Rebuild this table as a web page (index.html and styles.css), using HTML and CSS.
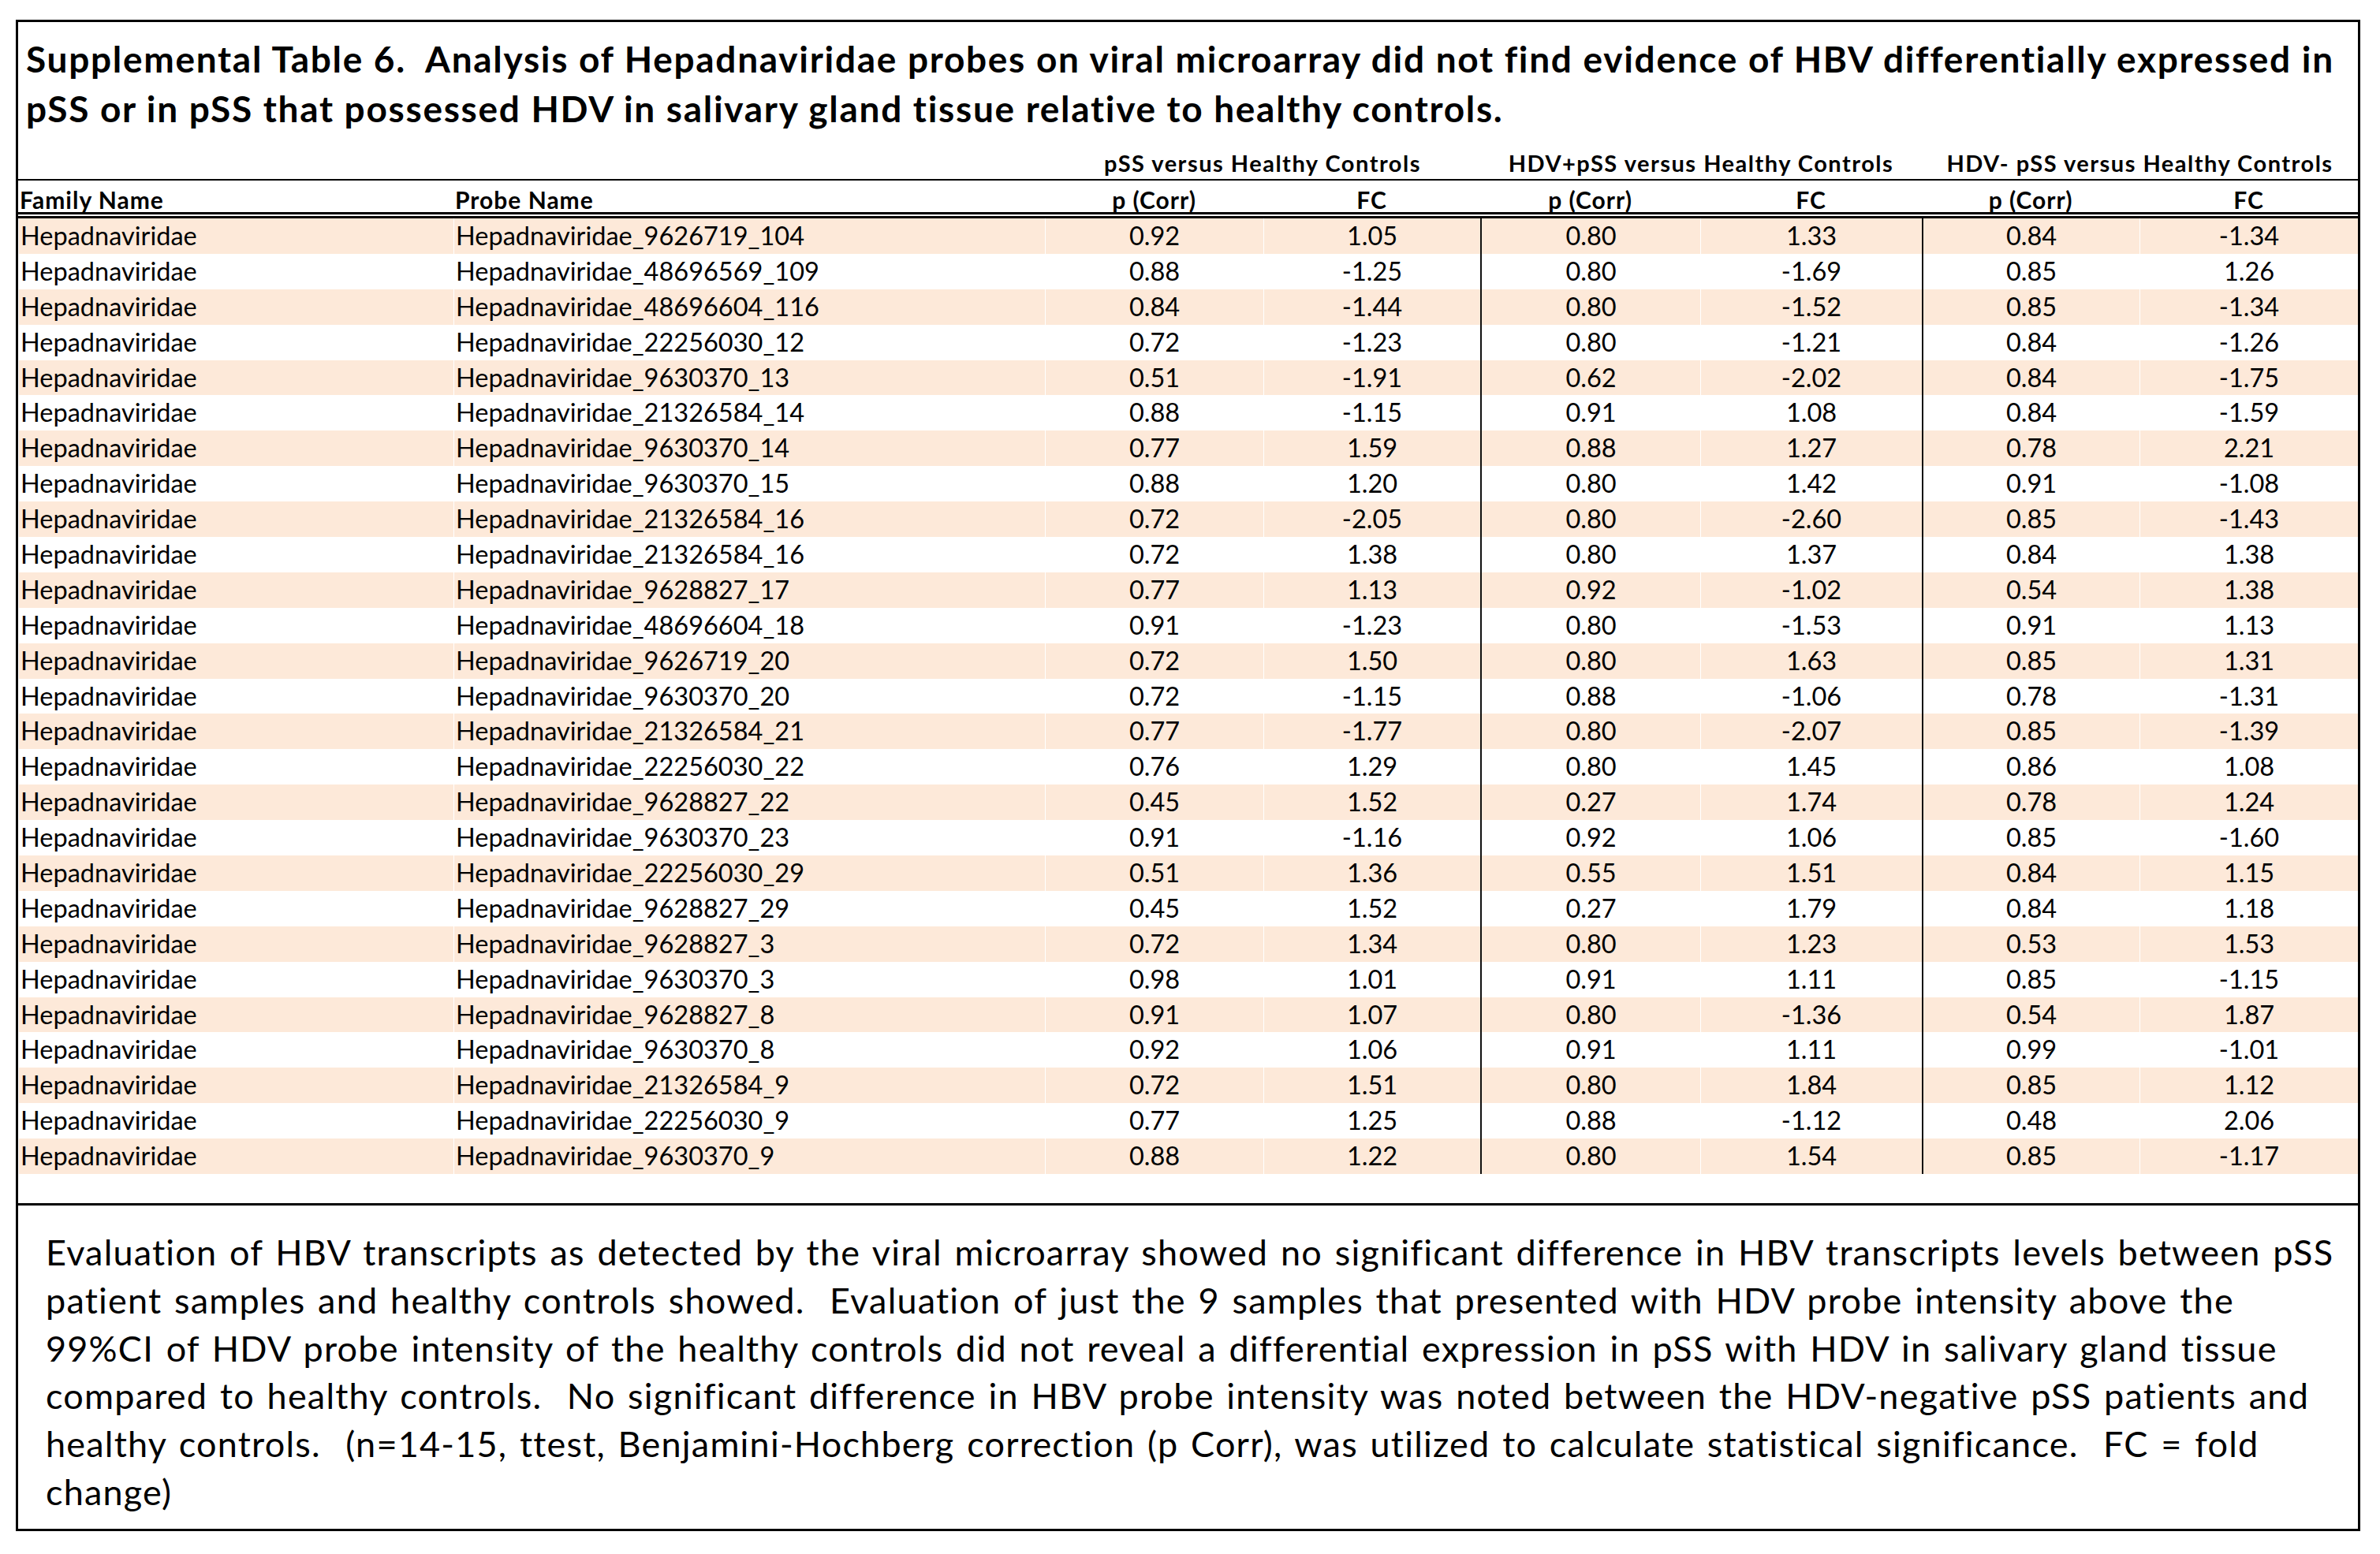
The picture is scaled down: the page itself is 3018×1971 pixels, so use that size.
FILE: index.html
```html
<!DOCTYPE html>
<html lang="en">
<head>
<meta charset="utf-8">
<title>Supplemental Table 6</title>
<link rel="stylesheet" href="styles.css">
</head>
<body>
<div class="sheet">
  <div class="title">Supplemental Table 6.&nbsp; Analysis of Hepadnaviridae probes on viral microarray did not find evidence of HBV differentially expressed in<br>pSS or in pSS that possessed HDV in salivary gland tissue relative to healthy controls.</div>

  <div class="row groups">
    <div class="span2"></div>
    <div class="span2 ctr">pSS versus Healthy Controls</div>
    <div class="span2 ctr">HDV+pSS versus Healthy Controls</div>
    <div class="span2 ctr">HDV- pSS versus Healthy Controls</div>
  </div>

  <div class="row heads">
    <div class="lft">Family Name</div>
    <div class="lft">Probe Name</div>
    <div class="ctr">p (Corr)</div>
    <div class="ctr">FC</div>
    <div class="ctr">p (Corr)</div>
    <div class="ctr">FC</div>
    <div class="ctr">p (Corr)</div>
    <div class="ctr">FC</div>
  </div>

  <div class="body">
    <div class="row data"><div class="lft">Hepadnaviridae</div><div class="lft">Hepadnaviridae_9626719_104</div><div class="ctr">0.92</div><div class="ctr">1.05</div><div class="ctr sep">0.80</div><div class="ctr">1.33</div><div class="ctr sep">0.84</div><div class="ctr">-1.34</div></div>
    <div class="row data"><div class="lft">Hepadnaviridae</div><div class="lft">Hepadnaviridae_48696569_109</div><div class="ctr">0.88</div><div class="ctr">-1.25</div><div class="ctr sep">0.80</div><div class="ctr">-1.69</div><div class="ctr sep">0.85</div><div class="ctr">1.26</div></div>
    <div class="row data"><div class="lft">Hepadnaviridae</div><div class="lft">Hepadnaviridae_48696604_116</div><div class="ctr">0.84</div><div class="ctr">-1.44</div><div class="ctr sep">0.80</div><div class="ctr">-1.52</div><div class="ctr sep">0.85</div><div class="ctr">-1.34</div></div>
    <div class="row data"><div class="lft">Hepadnaviridae</div><div class="lft">Hepadnaviridae_22256030_12</div><div class="ctr">0.72</div><div class="ctr">-1.23</div><div class="ctr sep">0.80</div><div class="ctr">-1.21</div><div class="ctr sep">0.84</div><div class="ctr">-1.26</div></div>
    <div class="row data"><div class="lft">Hepadnaviridae</div><div class="lft">Hepadnaviridae_9630370_13</div><div class="ctr">0.51</div><div class="ctr">-1.91</div><div class="ctr sep">0.62</div><div class="ctr">-2.02</div><div class="ctr sep">0.84</div><div class="ctr">-1.75</div></div>
    <div class="row data"><div class="lft">Hepadnaviridae</div><div class="lft">Hepadnaviridae_21326584_14</div><div class="ctr">0.88</div><div class="ctr">-1.15</div><div class="ctr sep">0.91</div><div class="ctr">1.08</div><div class="ctr sep">0.84</div><div class="ctr">-1.59</div></div>
    <div class="row data"><div class="lft">Hepadnaviridae</div><div class="lft">Hepadnaviridae_9630370_14</div><div class="ctr">0.77</div><div class="ctr">1.59</div><div class="ctr sep">0.88</div><div class="ctr">1.27</div><div class="ctr sep">0.78</div><div class="ctr">2.21</div></div>
    <div class="row data"><div class="lft">Hepadnaviridae</div><div class="lft">Hepadnaviridae_9630370_15</div><div class="ctr">0.88</div><div class="ctr">1.20</div><div class="ctr sep">0.80</div><div class="ctr">1.42</div><div class="ctr sep">0.91</div><div class="ctr">-1.08</div></div>
    <div class="row data"><div class="lft">Hepadnaviridae</div><div class="lft">Hepadnaviridae_21326584_16</div><div class="ctr">0.72</div><div class="ctr">-2.05</div><div class="ctr sep">0.80</div><div class="ctr">-2.60</div><div class="ctr sep">0.85</div><div class="ctr">-1.43</div></div>
    <div class="row data"><div class="lft">Hepadnaviridae</div><div class="lft">Hepadnaviridae_21326584_16</div><div class="ctr">0.72</div><div class="ctr">1.38</div><div class="ctr sep">0.80</div><div class="ctr">1.37</div><div class="ctr sep">0.84</div><div class="ctr">1.38</div></div>
    <div class="row data"><div class="lft">Hepadnaviridae</div><div class="lft">Hepadnaviridae_9628827_17</div><div class="ctr">0.77</div><div class="ctr">1.13</div><div class="ctr sep">0.92</div><div class="ctr">-1.02</div><div class="ctr sep">0.54</div><div class="ctr">1.38</div></div>
    <div class="row data"><div class="lft">Hepadnaviridae</div><div class="lft">Hepadnaviridae_48696604_18</div><div class="ctr">0.91</div><div class="ctr">-1.23</div><div class="ctr sep">0.80</div><div class="ctr">-1.53</div><div class="ctr sep">0.91</div><div class="ctr">1.13</div></div>
    <div class="row data"><div class="lft">Hepadnaviridae</div><div class="lft">Hepadnaviridae_9626719_20</div><div class="ctr">0.72</div><div class="ctr">1.50</div><div class="ctr sep">0.80</div><div class="ctr">1.63</div><div class="ctr sep">0.85</div><div class="ctr">1.31</div></div>
    <div class="row data"><div class="lft">Hepadnaviridae</div><div class="lft">Hepadnaviridae_9630370_20</div><div class="ctr">0.72</div><div class="ctr">-1.15</div><div class="ctr sep">0.88</div><div class="ctr">-1.06</div><div class="ctr sep">0.78</div><div class="ctr">-1.31</div></div>
    <div class="row data"><div class="lft">Hepadnaviridae</div><div class="lft">Hepadnaviridae_21326584_21</div><div class="ctr">0.77</div><div class="ctr">-1.77</div><div class="ctr sep">0.80</div><div class="ctr">-2.07</div><div class="ctr sep">0.85</div><div class="ctr">-1.39</div></div>
    <div class="row data"><div class="lft">Hepadnaviridae</div><div class="lft">Hepadnaviridae_22256030_22</div><div class="ctr">0.76</div><div class="ctr">1.29</div><div class="ctr sep">0.80</div><div class="ctr">1.45</div><div class="ctr sep">0.86</div><div class="ctr">1.08</div></div>
    <div class="row data"><div class="lft">Hepadnaviridae</div><div class="lft">Hepadnaviridae_9628827_22</div><div class="ctr">0.45</div><div class="ctr">1.52</div><div class="ctr sep">0.27</div><div class="ctr">1.74</div><div class="ctr sep">0.78</div><div class="ctr">1.24</div></div>
    <div class="row data"><div class="lft">Hepadnaviridae</div><div class="lft">Hepadnaviridae_9630370_23</div><div class="ctr">0.91</div><div class="ctr">-1.16</div><div class="ctr sep">0.92</div><div class="ctr">1.06</div><div class="ctr sep">0.85</div><div class="ctr">-1.60</div></div>
    <div class="row data"><div class="lft">Hepadnaviridae</div><div class="lft">Hepadnaviridae_22256030_29</div><div class="ctr">0.51</div><div class="ctr">1.36</div><div class="ctr sep">0.55</div><div class="ctr">1.51</div><div class="ctr sep">0.84</div><div class="ctr">1.15</div></div>
    <div class="row data"><div class="lft">Hepadnaviridae</div><div class="lft">Hepadnaviridae_9628827_29</div><div class="ctr">0.45</div><div class="ctr">1.52</div><div class="ctr sep">0.27</div><div class="ctr">1.79</div><div class="ctr sep">0.84</div><div class="ctr">1.18</div></div>
    <div class="row data"><div class="lft">Hepadnaviridae</div><div class="lft">Hepadnaviridae_9628827_3</div><div class="ctr">0.72</div><div class="ctr">1.34</div><div class="ctr sep">0.80</div><div class="ctr">1.23</div><div class="ctr sep">0.53</div><div class="ctr">1.53</div></div>
    <div class="row data"><div class="lft">Hepadnaviridae</div><div class="lft">Hepadnaviridae_9630370_3</div><div class="ctr">0.98</div><div class="ctr">1.01</div><div class="ctr sep">0.91</div><div class="ctr">1.11</div><div class="ctr sep">0.85</div><div class="ctr">-1.15</div></div>
    <div class="row data"><div class="lft">Hepadnaviridae</div><div class="lft">Hepadnaviridae_9628827_8</div><div class="ctr">0.91</div><div class="ctr">1.07</div><div class="ctr sep">0.80</div><div class="ctr">-1.36</div><div class="ctr sep">0.54</div><div class="ctr">1.87</div></div>
    <div class="row data"><div class="lft">Hepadnaviridae</div><div class="lft">Hepadnaviridae_9630370_8</div><div class="ctr">0.92</div><div class="ctr">1.06</div><div class="ctr sep">0.91</div><div class="ctr">1.11</div><div class="ctr sep">0.99</div><div class="ctr">-1.01</div></div>
    <div class="row data"><div class="lft">Hepadnaviridae</div><div class="lft">Hepadnaviridae_21326584_9</div><div class="ctr">0.72</div><div class="ctr">1.51</div><div class="ctr sep">0.80</div><div class="ctr">1.84</div><div class="ctr sep">0.85</div><div class="ctr">1.12</div></div>
    <div class="row data"><div class="lft">Hepadnaviridae</div><div class="lft">Hepadnaviridae_22256030_9</div><div class="ctr">0.77</div><div class="ctr">1.25</div><div class="ctr sep">0.88</div><div class="ctr">-1.12</div><div class="ctr sep">0.48</div><div class="ctr">2.06</div></div>
    <div class="row data"><div class="lft">Hepadnaviridae</div><div class="lft">Hepadnaviridae_9630370_9</div><div class="ctr">0.88</div><div class="ctr">1.22</div><div class="ctr sep">0.80</div><div class="ctr">1.54</div><div class="ctr sep">0.85</div><div class="ctr">-1.17</div></div>
  </div>

  <div class="gap"></div>

  <div class="note">Evaluation of HBV transcripts as detected by the viral microarray showed no significant difference in HBV transcripts levels between pSS<br>patient samples and healthy controls showed.&nbsp; Evaluation of just the 9 samples that presented with HDV probe intensity above the<br>99%CI of HDV probe intensity of the healthy controls did not reveal a differential expression in pSS with HDV in salivary gland tissue<br>compared to healthy controls.&nbsp; No significant difference in HBV probe intensity was noted between the HDV-negative pSS patients and<br>healthy controls.&nbsp; (n=14-15, ttest, Benjamini-Hochberg correction (p Corr), was utilized to calculate statistical significance.&nbsp; FC = fold<br>change)</div>
</div>
</body>
</html>
```

FILE: styles.css
```css
html, body {
  margin: 0;
  padding: 0;
  background: #ffffff;
}

body {
  font-family: Lato, "Liberation Sans", sans-serif;
  color: #000000;
}

.sheet {
  margin: 25px 0 0 20px;
  width: 2967px;
  border: 3px solid #000000;
}

.title {
  padding: 15px 0 4px 10px;
  font-size: 46px;
  font-weight: 700;
  letter-spacing: 1.7px;
  line-height: 63px;
  white-space: nowrap;
}

.row {
  display: grid;
  grid-template-columns: 552px 750px 277px 275px 279px 281px 276px 277px;
}

.span2 {
  grid-column: span 2;
}

.ctr {
  text-align: center;
}

.lft {
  text-align: left;
  padding-left: 2px;
}

.groups {
  padding: 19px 0 5px 0;
  font-size: 29px;
  font-weight: 700;
  letter-spacing: 1.5px;
  line-height: 30px;
  border-bottom: 2px solid #000000;
  white-space: nowrap;
}

.heads {
  padding-top: 8px;
  font-size: 30px;
  font-weight: 700;
  letter-spacing: 1px;
  line-height: 32px;
  border-bottom: 8px double #000000;
  white-space: nowrap;
}

.data {
  height: 44.9px;
  font-size: 32.5px;
  line-height: 44.9px;
  white-space: nowrap;
}

.data > div {
  border-left: 1px solid #ffffff;
}

.data > div.sep {
  border-left: 2px solid #111111;
}

.data:nth-child(odd) {
  background: #fde9d9;
}

.gap {
  height: 37px;
}

.note {
  border-top: 3px solid #000000;
  padding: 29px 0 16px 35px;
  font-size: 45px;
  letter-spacing: 1.2px;
  word-spacing: 3px;
  line-height: 60.8px;
  white-space: nowrap;
}
```
